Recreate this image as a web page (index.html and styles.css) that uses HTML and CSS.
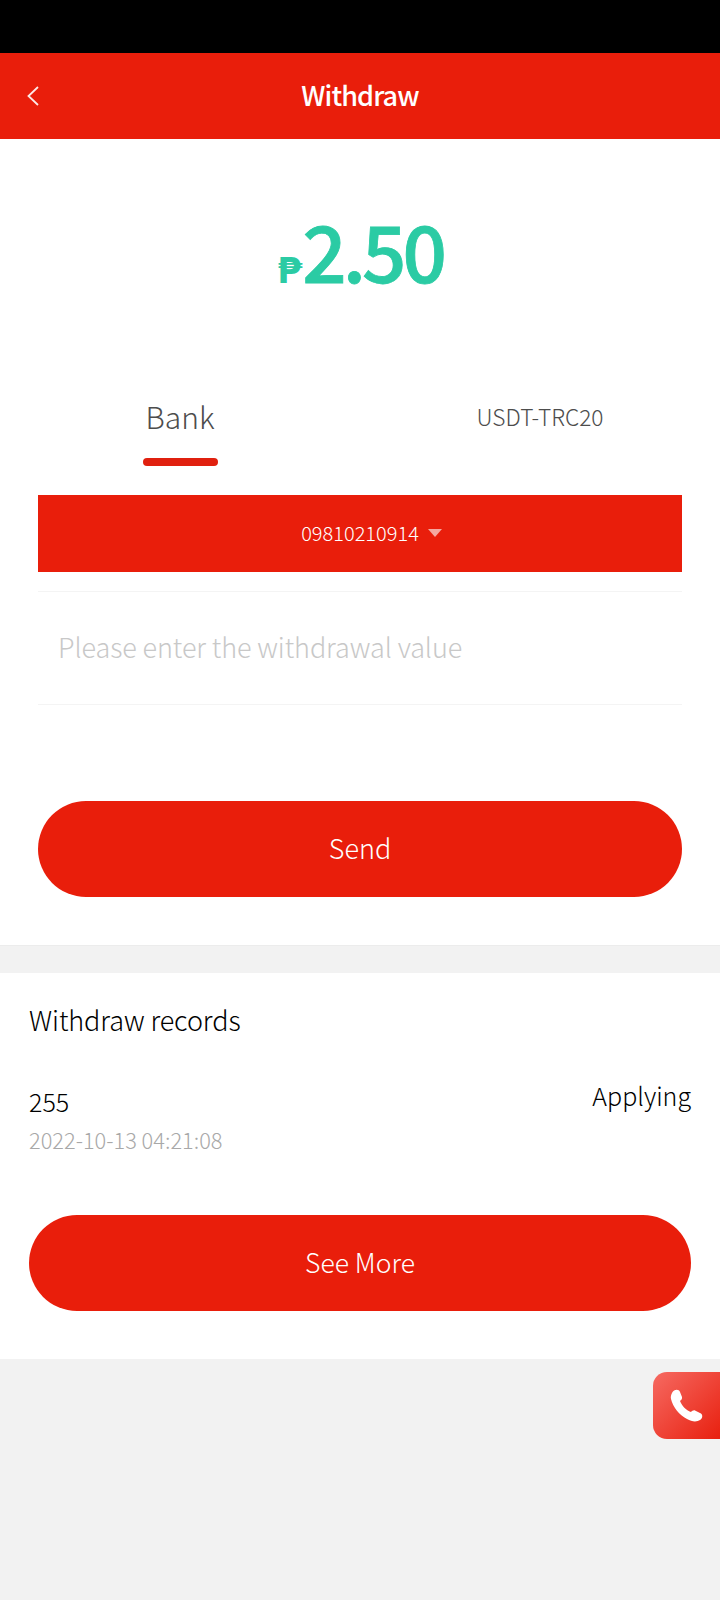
FILE: index.html
```html
<!DOCTYPE html>
<html lang="en">
<head>
<meta charset="utf-8">
<title>Withdraw</title>
<link rel="stylesheet" href="styles.css">
</head>
<body>
<div class="status"></div>
<header class="nav">
  <svg class="back" width="16" height="24" viewBox="0 0 16 24"><path d="M13 3 L3.500 12 L13 21" fill="none" stroke="#fff" stroke-opacity="0.9" stroke-width="1.8"/></svg>
  <h1 class="nav-title">Withdraw</h1>
</header>
<main class="panel">
  <div class="amount"><span class="cur">₱</span><span class="val">2.50</span></div>
  <div class="tabs">
    <div class="tab tab-active"><span>Bank</span><i class="bar"></i></div>
    <div class="tab"><span>USDT-TRC20</span></div>
  </div>
  <div class="form">
    <div class="select"><span>09810210914</span><i class="caret"></i></div>
    <div class="field">Please enter the withdrawal value</div>
    <button class="btn send">Send</button>
  </div>
</main>
<section class="records">
  <h2 class="rec-title">Withdraw records</h2>
  <div class="row">
    <div>
      <div class="num">255</div>
      <div class="date">2022-10-13 04:21:08</div>
    </div>
    <div class="state">Applying</div>
  </div>
  <button class="btn more">See More</button>
</section>
<a class="call">
  <svg width="34" height="34" viewBox="0 0 34 34"><path fill="#fff" d="M2 4C4 0 9 0 10 3L12 8C12.500 10 11 11 10 12C12 17 16 21 21 23C22 22 23.500 21 25 21.500L30 24C33 25 33 29 30 31C27 33 22 33 17 30C9 26 3 18 1 10C.5 8 1 6 2 4Z"/></svg>
</a>
</body>
</html>
```
FILE: styles.css
```css
* { box-sizing: border-box; }
html, body { margin: 0; padding: 0; }
body {
  width: 720px;
  height: 1600px;
  overflow: hidden;
  position: relative;
  background: #f2f2f2;
  font-family: "Noto Sans CJK SC", "Noto Sans", sans-serif;
  font-weight: 300;
}
.status { height: 53px; background: #000; }
.nav {
  height: 86px;
  background: #e91e0b;
  display: flex;
  align-items: center;
  justify-content: center;
  padding-bottom: 4px;
  position: relative;
}
.back { position: absolute; left: 25px; top: 31px; }
.nav-title { margin: 0; color: #fff; font-size: 27px; font-weight: 500; letter-spacing: -0.9px; }
.panel { background: #fff; height: 807px; padding-top: 65px; border-bottom: 1px solid #ececec; }
.amount {
  display: flex;
  justify-content: center;
  align-items: baseline;
  color: #2bcba4;
  height: 90px;
  line-height: 90px;
  font-weight: 500;
}
.cur { font-size: 36px; font-family: "DejaVu Sans", sans-serif; font-weight: 700; }
.val { font-size: 78px; letter-spacing: -4px; -webkit-text-stroke: 0.8px #2bcba4; }
.tabs { display: flex; margin-top: 103px; height: 80px; }
.tab { flex: 1; display: flex; flex-direction: column; align-items: center; color: #4d4d4d; font-size: 22.7px; line-height: 40px; position: relative; }
.tab-active { font-size: 30px; line-height: 38px; }
.bar { position: absolute; top: 61px; width: 75px; height: 8px; border-radius: 4px; background: #e0200f; }
.form { padding: 0 38px; }
.select {
  margin-top: 18px;
  height: 77px;
  padding-bottom: 2px;
  background: #e91e0b;
  color: #fff;
  display: flex;
  align-items: center;
  justify-content: center;
  gap: 9px;
  font-size: 20px;
}
.caret { width: 0; height: 0; border: 7px solid transparent; border-top: 8px solid #f5a8a0; border-bottom: 0; margin-right: -23px; }
.field {
  margin-top: 19px;
  height: 114px;
  border-top: 1px solid #f4f4f4;
  border-bottom: 1px solid #f4f4f4;
  padding-left: 20px;
  line-height: 110px;
  color: #c8c8c8;
  font-size: 27px;
  letter-spacing: -0.1px;
}
.btn {
  display: block;
  border: 0;
  color: #fff;
  background: #e91e0b;
  height: 96px;
  border-radius: 48px;
  padding: 0 0 4px;
  font-family: inherit;
  font-weight: 300;
  width: 100%;
}
.send { margin-top: 96px; font-size: 27px; }
.records { margin-top: 27px; background: #fff; height: 386px; padding: 25px 29px 0; }
.rec-title { margin: 0; font-size: 27px; font-weight: 300; color: #000; line-height: 44px; letter-spacing: -0.1px; }
.row { display: flex; justify-content: space-between; margin-top: 37px; color: #000; font-size: 25px; }
.num { line-height: 44px; }
.date { color: #a8a8a8; font-size: 21.8px; line-height: 32px; margin-top: 1px; }
.state { line-height: 44px; margin-top: -6px; }
.more { margin-top: 59px; font-size: 26.5px; }
.call {
  position: absolute;
  left: 653px;
  top: 1372px;
  width: 67px;
  height: 67px;
  border-radius: 14px 0 0 14px;
  background: linear-gradient(135deg, #f66a62, #e8200f);
  display: flex;
  align-items: center;
  justify-content: center;
}
```
